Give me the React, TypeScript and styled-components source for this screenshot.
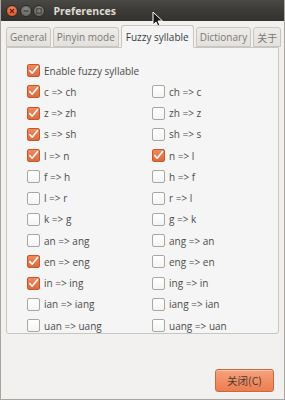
import React, { useState } from "react";
import styled, { createGlobalStyle } from "styled-components";

const GlobalStyle = createGlobalStyle`
  html, body {
    margin: 0;
    padding: 0;
    background: #f2f1f0;
  }
  body {
    font-family: "Open Sans", "Noto Sans", "Noto Sans CJK SC", sans-serif;
  }
`;

const Window = styled.div`
  position: relative;
  width: 285px;
  height: 400px;
  box-sizing: border-box;
  display: flex;
  flex-direction: column;
  background: #f2f1f0;
  border: 1px solid #a9a6a0;
  border-top: none;
  overflow: hidden;
`;

const TitleBar = styled.div`
  height: 21px;
  flex-shrink: 0;
  display: flex;
  align-items: center;
  padding-left: 6px;
  background: linear-gradient(#4a4945, #3c3b37 50%, #33322f);
  margin: 0 -1px;
`;

const WinButton = styled.div<{ close?: boolean }>`
  width: 12px;
  height: 12px;
  border-radius: 50%;
  margin-right: 1.5px;
  box-sizing: border-box;
  display: flex;
  align-items: center;
  justify-content: center;
  background: ${(p) =>
    p.close
      ? "radial-gradient(circle at 50% 35%, #f48a5e, #df4a1b)"
      : "radial-gradient(circle at 50% 35%, #8a8882, #5f5e59)"};
  border: 1px solid #2a2927;
`;

const Title = styled.div`
  margin-left: 7px;
  color: #dfdbd2;
  font-weight: 700;
  font-size: 10.5px;
`;

const Body = styled.div`
  display: flex;
  flex-direction: column;
  padding: 4px 5px 0 5px;
`;

const TabRow = styled.div`
  display: flex;
  align-items: flex-end;
  height: 22px;
  gap: 2px;
  position: relative;
  z-index: 1;
`;

const Tab = styled.div<{ active?: boolean }>`
  height: ${(p) => (p.active ? "23px" : "20px")};
  box-sizing: border-box;
  padding: 0 ${(p) => (p.active ? "4px" : "3px")};
  display: flex;
  align-items: center;
  font-size: 10px;
  color: ${(p) => (p.active ? "#3c3c3c" : "#7c7872")};
  background: ${(p) =>
    p.active ? "#f5f5f5" : "linear-gradient(#edecea, #e3e1de)"};
  border: 1px solid #c9c6c1;
  border-bottom: ${(p) => (p.active ? "1px solid #f5f5f5" : "1px solid #c9c6c1")};
  border-radius: 3px 3px 0 0;
  white-space: nowrap;
  margin-bottom: ${(p) => (p.active ? "-1px" : "0")};
`;

const Panel = styled.div`
  height: 287px;
  box-sizing: border-box;
  background: #f5f5f5;
  border: 1px solid #c9c6c1;
  border-radius: 0 0 3px 3px;
  padding: 12px 0 0 20px;
`;

const Grid = styled.div`
  display: grid;
  grid-template-columns: 125px 125px;
  grid-auto-rows: 21.25px;
`;

const Option = styled.label<{ wide?: boolean }>`
  display: flex;
  align-items: center;
  grid-column: ${(p) => (p.wide ? "1 / span 2" : "auto")};
  font-size: 10px;
  color: #4c4c4c;
  cursor: default;
`;

const Box = styled.span<{ checked?: boolean }>`
  width: 13px;
  height: 13px;
  box-sizing: border-box;
  border-radius: 2px;
  margin-right: 4px;
  flex-shrink: 0;
  display: flex;
  align-items: center;
  justify-content: center;
  background: ${(p) =>
    p.checked ? "linear-gradient(#f08a5c, #e0693a)" : "linear-gradient(#ffffff, #f4f4f4)"};
  border: 1px solid ${(p) => (p.checked ? "#c9562a" : "#a9a7a3")};
`;

const Footer = styled.div`
  flex: 1;
  display: flex;
  justify-content: flex-end;
  align-items: flex-end;
  padding: 0 10px 7px 0;
`;

const CloseButton = styled.button`
  width: 59px;
  height: 23px;
  box-sizing: border-box;
  border: 1px solid #c46a45;
  border-radius: 3px;
  background: linear-gradient(#f5a27c, #ed7d4f);
  color: #4a3a33;
  font-family: "Noto Sans CJK SC", "Open Sans", sans-serif;
  font-size: 10.5px;
  padding: 0;
  box-shadow: inset 0 1px 0 rgba(255, 255, 255, 0.35);
`;

const Cursor = styled.svg`
  position: absolute;
  left: 151px;
  top: 11px;
`;

const Check = () => (
  <svg width="11" height="11" viewBox="0 0 11 11">
    <path
      d="M1.8 5.6 L4.2 8.2 L9.6 1.6"
      fill="none"
      stroke="#ffffff"
      strokeWidth="1.6"
      strokeLinecap="round"
      strokeLinejoin="round"
    />
  </svg>
);

const pairs: [string, boolean, string, boolean][] = [
  ["c => ch", true, "ch => c", false],
  ["z => zh", true, "zh => z", false],
  ["s => sh", true, "sh => s", false],
  ["l => n", true, "n => l", true],
  ["f => h", false, "h => f", false],
  ["l => r", false, "r => l", false],
  ["k => g", false, "g => k", false],
  ["an => ang", false, "ang => an", false],
  ["en => eng", true, "eng => en", false],
  ["in => ing", true, "ing => in", false],
  ["ian => iang", false, "iang => ian", false],
  ["uan => uang", false, "uang => uan", false],
];

const tabs = ["General", "Pinyin mode", "Fuzzy syllable", "Dictionary", "关于"];

export default function App() {
  const [checks, setChecks] = useState<Record<string, boolean>>(() => {
    const init: Record<string, boolean> = { enable: true };
    pairs.forEach(([a, ac, b, bc]) => {
      init[a + "|L"] = ac;
      init[b + "|R"] = bc;
    });
    return init;
  });

  const toggle = (key: string) => setChecks({ ...checks, [key]: !checks[key] });

  const renderOption = (key: string, label: string, wide?: boolean) => (
    <Option key={key} wide={wide} onClick={() => toggle(key)}>
      <Box checked={checks[key]}>{checks[key] && <Check />}</Box>
      {label}
    </Option>
  );

  return (
    <>
      <GlobalStyle />
      <Window>
        <TitleBar>
          <WinButton close>
            <svg width="6" height="6" viewBox="0 0 6 6">
              <path d="M1 1 L5 5 M5 1 L1 5" stroke="#5a1f0a" strokeWidth="1.2" />
            </svg>
          </WinButton>
          <WinButton>
            <svg width="6" height="6" viewBox="0 0 6 6">
              <path d="M0.5 3 H5.5" stroke="#3a3936" strokeWidth="1.2" />
            </svg>
          </WinButton>
          <WinButton>
            <svg width="6" height="6" viewBox="0 0 6 6">
              <rect x="0.8" y="0.8" width="4.4" height="4.4" fill="none" stroke="#3a3936" strokeWidth="1" />
            </svg>
          </WinButton>
          <Title>Preferences</Title>
        </TitleBar>
        <Body>
          <TabRow>
            {tabs.map((t) => (
              <Tab key={t} active={t === "Fuzzy syllable"}>
                {t}
              </Tab>
            ))}
          </TabRow>
          <Panel>
            <Grid>
              {renderOption("enable", "Enable fuzzy syllable", true)}
              {pairs.map(([a, , b]) => (
                <React.Fragment key={a + b}>
                  {renderOption(a + "|L", a)}
                  {renderOption(b + "|R", b)}
                </React.Fragment>
              ))}
            </Grid>
          </Panel>
        </Body>
        <Footer>
          <CloseButton>关闭(C)</CloseButton>
        </Footer>
        <Cursor width="12" height="18" viewBox="0 0 12 18">
          <path
            d="M1 1 L1 14 L4 11 L6.5 16.5 L8.5 15.5 L6 10 L10.5 10 Z"
            fill="#1a1a1a"
            stroke="#ffffff"
            strokeWidth="1"
            strokeLinejoin="round"
          />
        </Cursor>
      </Window>
    </>
  );
}
